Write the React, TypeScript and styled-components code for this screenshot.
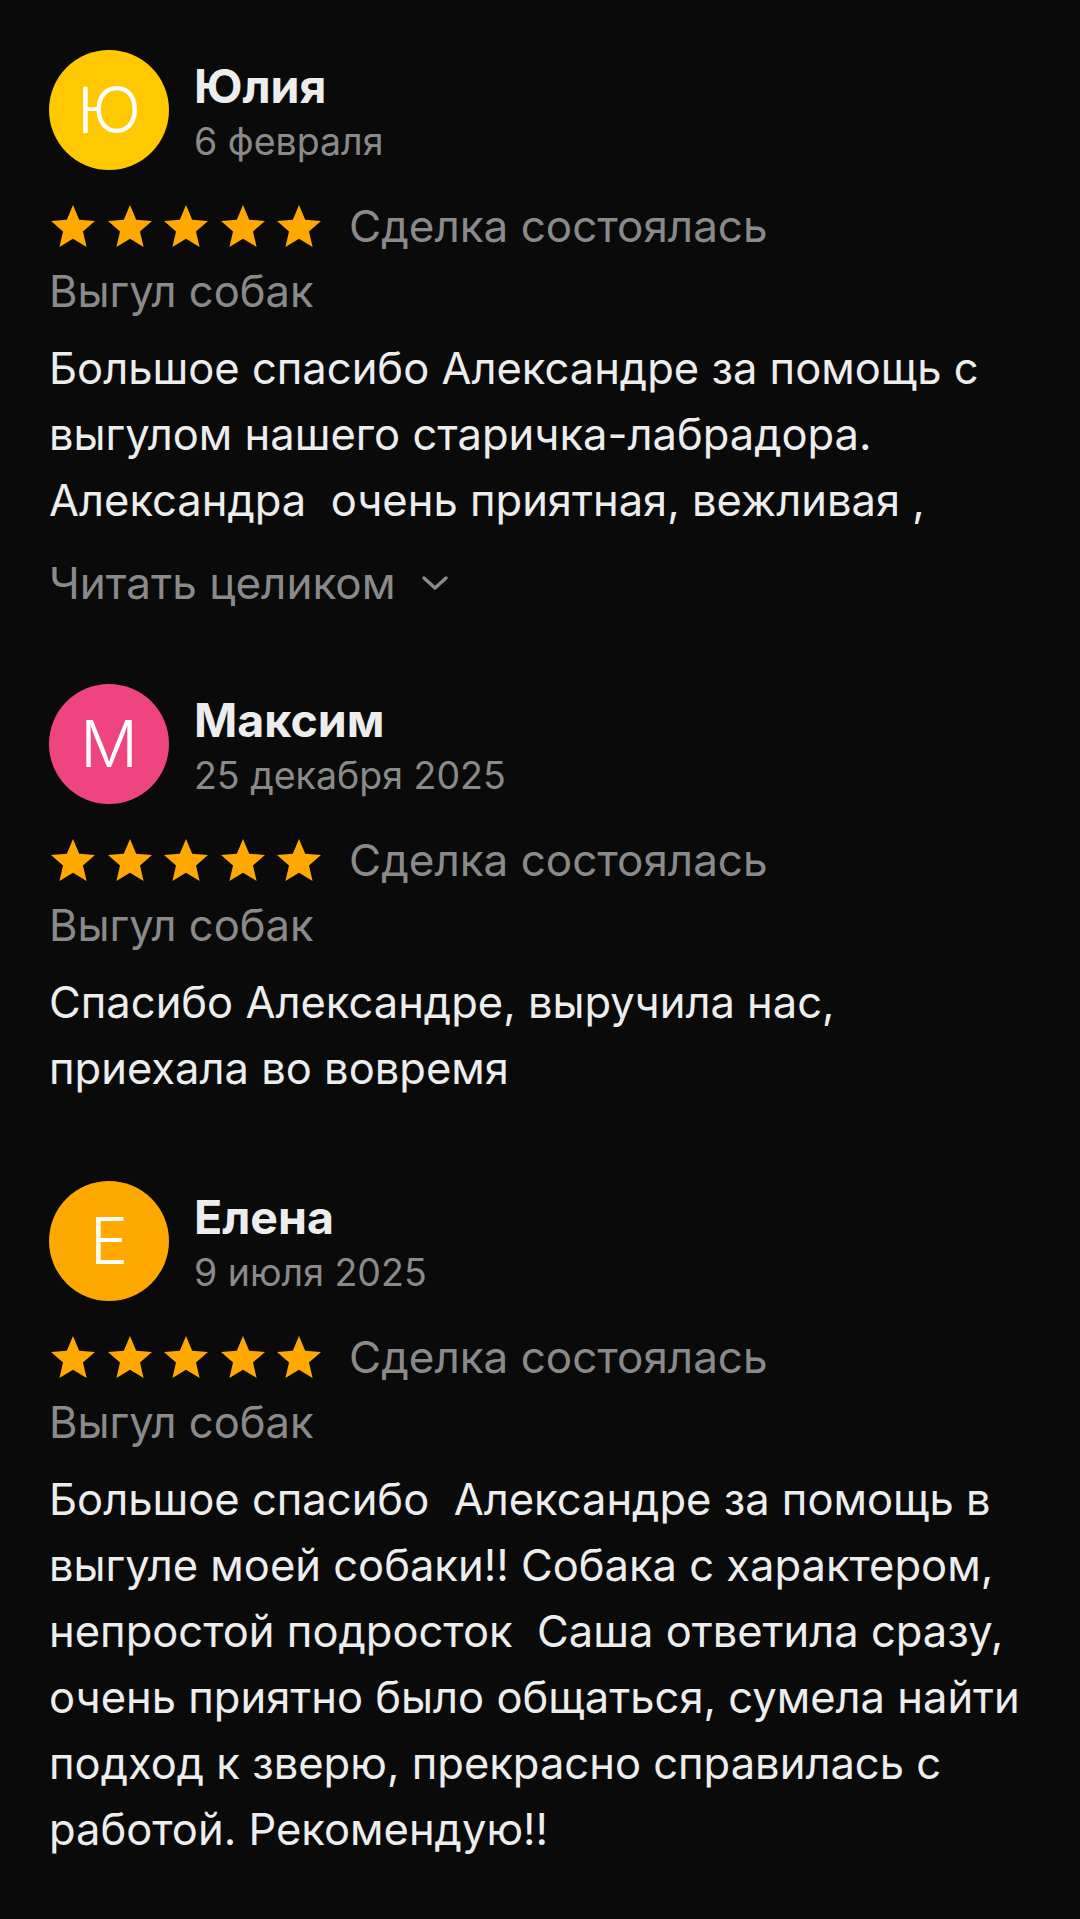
import styled, { createGlobalStyle } from 'styled-components'

interface Review {
  id: number
  name: string
  initial: string
  color: string
  date: string
  rating: number
  category: string
  text: string
  collapsed?: boolean
}

const reviews: Review[] = [
  {
    id: 1,
    name: 'Юлия',
    initial: 'Ю',
    color: '#ffc800',
    date: '6 февраля',
    rating: 5,
    category: 'Выгул собак',
    text: 'Большое спасибо Александре за помощь с выгулом нашего старичка-лабрадора. Александра\u00a0 очень приятная, вежливая ,',
    collapsed: true,
  },
  {
    id: 2,
    name: 'Максим',
    initial: 'М',
    color: '#ee4580',
    date: '25 декабря 2025',
    rating: 5,
    category: 'Выгул собак',
    text: 'Спасибо Александре, выручила нас, приехала во вовремя',
  },
  {
    id: 3,
    name: 'Елена',
    initial: 'Е',
    color: '#ffa800',
    date: '9 июля 2025',
    rating: 5,
    category: 'Выгул собак',
    text: 'Большое спасибо\u00a0 Александре за помощь в выгуле моей собаки!! Собака с характером, непростой подросток\u00a0 Саша ответила сразу, очень приятно было общаться, сумела найти подход к зверю, прекрасно справилась с работой. Рекомендую!!',
  },
]

const GlobalStyle = createGlobalStyle`
  html, body {
    margin: 0;
    padding: 0;
    background: #0a0a0a;
  }
  body {
    font-family: Inter, 'Noto Sans', 'Liberation Sans', sans-serif;
    -webkit-font-smoothing: antialiased;
  }
`

const Page = styled.div`
  min-height: 1919px;
  box-sizing: border-box;
  padding: 50px 49px 0 49px;
  background: #0a0a0a;
  display: flex;
  flex-direction: column;
  gap: 80px;
`

const Card = styled.div`
  display: flex;
  flex-direction: column;
`

const Header = styled.div`
  display: flex;
  align-items: flex-start;
  gap: 25px;
`

const Avatar = styled.div<{ $bg: string }>`
  width: 120px;
  height: 120px;
  border-radius: 50%;
  flex-shrink: 0;
  background: ${(p) => p.$bg};
  color: #ffffff;
  display: flex;
  align-items: center;
  justify-content: center;
  font-size: 64px;
  font-weight: 300;
  line-height: 1;
`

const Meta = styled.div`
  display: flex;
  flex-direction: column;
  padding-top: 8px;
`

const Name = styled.div`
  font-size: 46.5px;
  font-weight: 700;
  line-height: 56px;
  color: #ededed;
`

const DateText = styled.div`
  font-size: 37.5px;
  line-height: 56px;
  color: #8a8a8a;
`

const RatingRow = styled.div`
  display: flex;
  align-items: center;
  height: 48px;
  margin-top: 32px;
`

const Stars = styled.div`
  display: flex;
  gap: 12.5px;
  margin-left: 2px;
  margin-right: 28px;
`

const Status = styled.span`
  font-size: 44px;
  color: #8a8a8a;
`

const Category = styled.div`
  margin-top: 13px;
  font-size: 43.5px;
  line-height: 56px;
  color: #8a8a8a;
`

const Body = styled.p`
  margin: 16px 0 0 0;
  font-size: 43.5px;
  line-height: 66px;
  color: #ededed;
`

const ReadMore = styled.div`
  margin-top: 22px;
  margin-bottom: -7px;
  display: flex;
  align-items: center;
  gap: 25px;
  font-size: 44px;
  line-height: 56px;
  color: #8a8a8a;
`

function Star() {
  return (
    <svg width="44" height="42" viewBox="2 2 20 19">
      <path
        fill="#ffa800"
        d="M12 17.27L18.18 21l-1.64-7.03L22 9.24l-7.19-.61L12 2 9.19 8.63 2 9.24l5.46 4.73L5.82 21z"
      />
    </svg>
  )
}

function Chevron() {
  return (
    <svg width="28" height="16" viewBox="0 0 28 16">
      <path d="M3 3l11 10L25 3" fill="none" stroke="#8a8a8a" strokeWidth="3.4" strokeLinecap="round" strokeLinejoin="round" />
    </svg>
  )
}

function ReviewCard({ review }: { review: Review }) {
  return (
    <Card>
      <Header>
        <Avatar $bg={review.color}>{review.initial}</Avatar>
        <Meta>
          <Name>{review.name}</Name>
          <DateText>{review.date}</DateText>
        </Meta>
      </Header>
      <RatingRow>
        <Stars>
          {Array.from({ length: review.rating }).map((_, i) => (
            <Star key={i} />
          ))}
        </Stars>
        <Status>Сделка состоялась</Status>
      </RatingRow>
      <Category>{review.category}</Category>
      <Body>{review.text}</Body>
      {review.collapsed && (
        <ReadMore>
          Читать целиком
          <Chevron />
        </ReadMore>
      )}
    </Card>
  )
}

export default function App(): JSX.Element {
  return (
    <>
      <GlobalStyle />
      <Page>
        {reviews.map((review) => (
          <ReviewCard key={review.id} review={review} />
        ))}
      </Page>
    </>
  )
}
